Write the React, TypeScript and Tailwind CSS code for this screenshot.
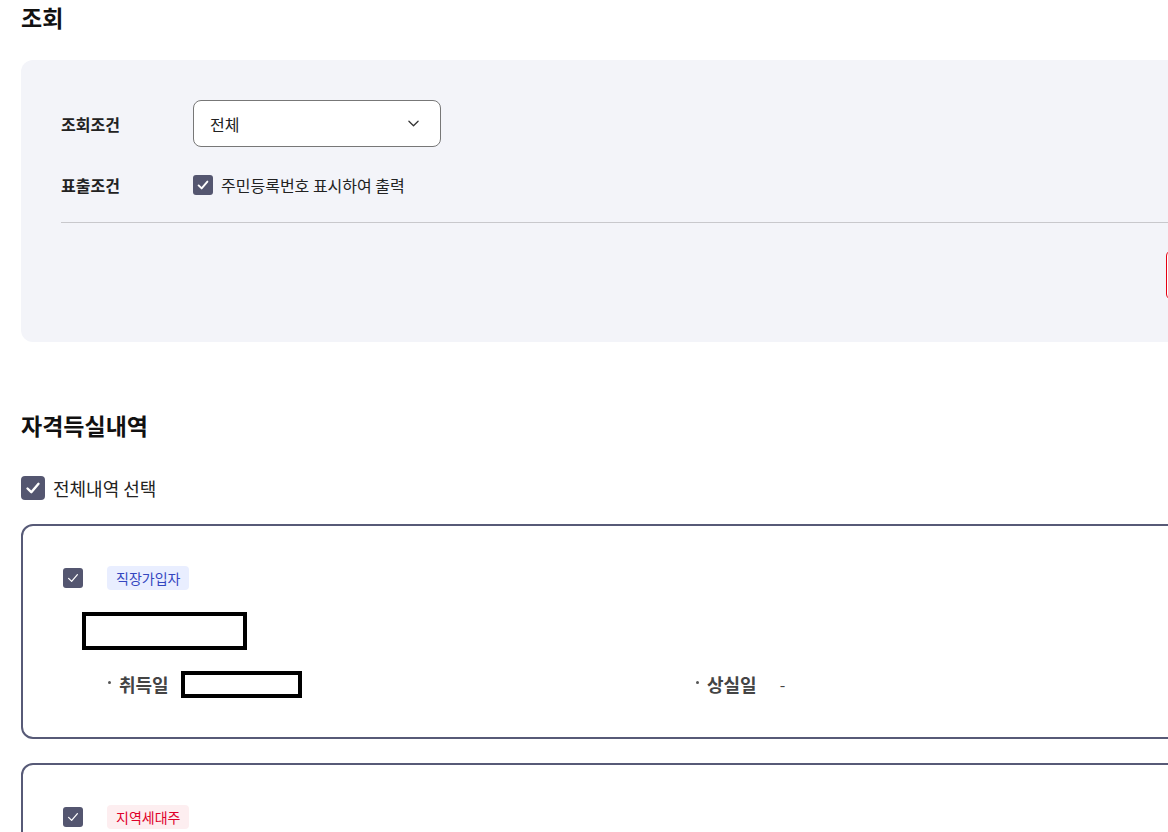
import React from "react";

const FONT = { fontFamily: '"Noto Sans CJK KR", "Noto Sans", sans-serif' };

function Check({ size, thin }: { size: number; thin?: boolean }) {
  const cls =
    size === 24
      ? "w-[24px] h-[24px] rounded-[4px]"
      : "w-[20px] h-[20px] rounded-[3px]";
  return (
    <span className={`${cls} bg-[#545670] flex items-center justify-center shrink-0`}>
      <svg
        viewBox="0 0 20 20"
        className={size === 24 ? "w-[20px] h-[20px]" : "w-[16px] h-[16px]"}
        fill="none"
        stroke="#ffffff"
        strokeWidth={thin ? 1.6 : 2.4}
        strokeLinecap="round"
        strokeLinejoin="round"
      >
        <path d="M4.5 10.5 L8.3 14.2 L15.5 5.8" />
      </svg>
    </span>
  );
}

function Dot() {
  return <span className="w-[3px] h-[3px] rounded-full bg-[#555] mr-[8px] -mt-[3px]" />;
}

function Card({
  badge,
  badgeCls,
  last,
}: {
  badge: string;
  badgeCls: string;
  last?: boolean;
}) {
  return (
    <div className="border-2 border-[#575a77] rounded-[12px] pt-[40px] pb-[40px] pl-[40px] pr-[40px]">
      <div className="flex items-center h-[24px]">
        <Check size={20} thin />
        <span
          className={`ml-[24px] h-[24px] px-[9px] rounded-[4px] text-[14px] leading-[24px] ${badgeCls}`}
        >
          {badge}
        </span>
      </div>
      {!last && (
        <>
          <div className="mt-[22px] ml-[19px] w-[165px] h-[38px] border-[4px] border-black" />
          <div className="mt-[21px] flex items-center h-[26px]">
            <div className="flex items-center w-[633px] pl-[45px]">
              <Dot />
              <span className="text-[18px] font-bold text-[#444]">취득일</span>
              <span className="ml-[12px] w-[121px] h-[27px] border-[4px] border-black" />
            </div>
            <div className="flex items-center">
              <Dot />
              <span className="text-[18px] font-bold text-[#444]">상실일</span>
              <span className="ml-[23px] text-[16px] text-[#444]">-</span>
            </div>
          </div>
        </>
      )}
    </div>
  );
}

export default function App() {
  return (
    <div className="w-[1168px] h-[832px] overflow-hidden bg-white" style={FONT}>
      <div className="w-[1347px] px-[21px] text-[#1a1a1a]">
        <h2 className="text-[23px] leading-[34px] font-bold text-[#111]">조회</h2>

        <div className="mt-[26px] bg-[#f3f4f9] rounded-[12px] pt-[40px] px-[40px] pb-[42px]">
          <div className="flex items-center h-[47px]">
            <span className="w-[132px] text-[16px] font-bold text-[#222]">조회조건</span>
            <div className="w-[248px] h-[47px] bg-white border border-[#777] rounded-[8px] flex items-center justify-between pl-[16px] pr-[21px]">
              <span className="text-[16px] text-[#222]">전체</span>
              <svg viewBox="0 0 12 7" className="w-[11px] h-[7px]" fill="none" stroke="#333" strokeWidth={1.4} strokeLinecap="round" strokeLinejoin="round">
                <path d="M1 1 L6 6 L11 1" />
              </svg>
            </div>
          </div>
          <div className="flex items-center h-[20px] mt-[28px]">
            <span className="w-[132px] text-[16px] font-bold text-[#222]">표출조건</span>
            <Check size={20} />
            <span className="ml-[8px] text-[16px] text-[#222]">주민등록번호 표시하여 출력</span>
          </div>
          <div className="mt-[27px] border-t border-[#c8c8cc]" />
          <div className="mt-[27px] flex justify-end">
            <button className="w-[120px] h-[50px] rounded-[6px] border border-[#e60012] bg-white text-[#e60012] text-[16px] font-bold">
              조회
            </button>
          </div>
        </div>

        <h2 className="mt-[66px] text-[23px] leading-[34px] font-bold text-[#111]">자격득실내역</h2>

        <div className="mt-[34px] flex items-center h-[24px]">
          <Check size={24} />
          <span className="ml-[8px] text-[18px] text-[#222]">전체내역 선택</span>
        </div>

        <div className="mt-[24px] flex flex-col gap-[24px]">
          <Card badge="직장가입자" badgeCls="bg-[#e9eeff] text-[#3446c0]" />
          <Card badge="지역세대주" badgeCls="bg-[#fdeef0] text-[#e0002a]" />
        </div>
      </div>
    </div>
  );
}
